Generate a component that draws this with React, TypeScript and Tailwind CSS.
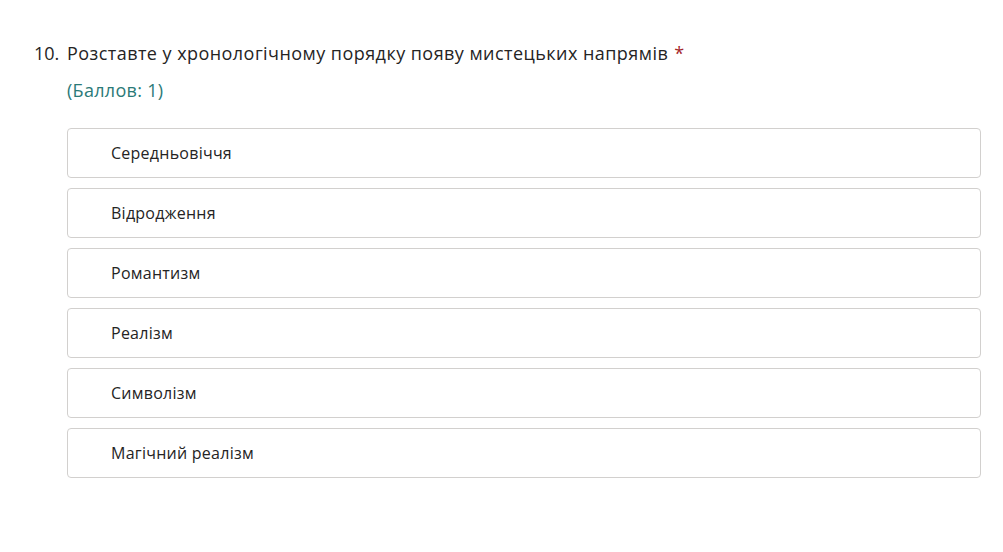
import React from "react";

const items = ["Середньовіччя", "Відродження", "Романтизм", "Реалізм", "Символізм", "Магічний реалізм"];

export default function App() {
  return (
    <div className="w-[1003px] h-[552px] bg-white text-[#252424]" style={{ fontFamily: '"Open Sans", sans-serif' }}>
      <div className="pt-[40px] pl-[34px] pr-[22px]">
        <div className="flex text-[18px] leading-[26px] tracking-[0.45px]">
          <span className="w-[33px] shrink-0 tracking-normal">10.</span>
          <span>
            Розставте у хронологічному порядку появу мистецьких напрямів
            <span className="text-[#a4262c] ml-[6px]">*</span>
          </span>
        </div>
        <div className="pl-[33px] mt-[11px] text-[18px] leading-[26px] tracking-[0.3px] text-[#2b7a78]">(Баллов: 1)</div>
        <div className="pl-[33px] mt-[25px] flex flex-col gap-[10px]">
          {items.map((t) => (
            <div key={t} className="h-[50px] border border-[#d2d0ce] rounded-[4px] flex items-center pl-[43px] text-[16px] tracking-[0.25px]">
              {t}
            </div>
          ))}
        </div>
      </div>
    </div>
  );
}
